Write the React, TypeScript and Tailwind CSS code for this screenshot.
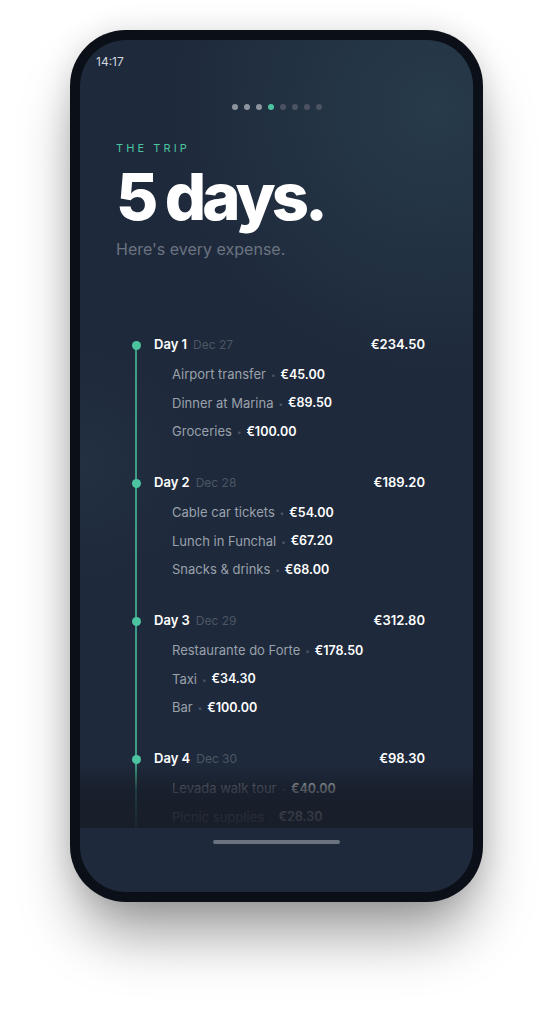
import React from "react";

const days = [
  {
    label: "Day 1",
    date: "Dec 27",
    total: "€234.50",
    items: [
      { name: "Airport transfer", amount: "€45.00" },
      { name: "Dinner at Marina", amount: "€89.50" },
      { name: "Groceries", amount: "€100.00" },
    ],
  },
  {
    label: "Day 2",
    date: "Dec 28",
    total: "€189.20",
    items: [
      { name: "Cable car tickets", amount: "€54.00" },
      { name: "Lunch in Funchal", amount: "€67.20" },
      { name: "Snacks & drinks", amount: "€68.00" },
    ],
  },
  {
    label: "Day 3",
    date: "Dec 29",
    total: "€312.80",
    items: [
      { name: "Restaurante do Forte", amount: "€178.50" },
      { name: "Taxi", amount: "€34.30" },
      { name: "Bar", amount: "€100.00" },
    ],
  },
  {
    label: "Day 4",
    date: "Dec 30",
    total: "€98.30",
    items: [
      { name: "Levada walk tour", amount: "€40.00" },
      { name: "Picnic supplies", amount: "€28.30" },
    ],
  },
];

const Dots = () => (
  <div className="flex justify-center gap-[6px] mt-[34px]">
    {[0, 1, 2, 3, 4, 5, 6, 7].map((i) => (
      <div
        key={i}
        className={`w-[6px] h-[6px] rounded-full ${
          i === 3 ? "bg-[#4cc4a0]" : i < 3 ? "bg-[#8d949e]" : "bg-[#4b5361]"
        }`}
      />
    ))}
  </div>
);

export default function App() {
  return (
    <div
      className="min-h-screen w-full bg-white flex justify-center pt-[30px]"
      style={{ fontFamily: "Inter, 'Noto Sans', sans-serif" }}
    >
      <div className="w-[413px] h-[872px] rounded-[56px] bg-[#0b0f17] p-[10px] shadow-[0_40px_60px_-10px_rgba(0,0,0,0.4),0_0_30px_rgba(0,0,0,0.12)]">
        <div className="relative w-[393px] h-[852px] rounded-[46px] bg-[#1e293b] overflow-hidden flex flex-col">
          {/* glows */}
          <div className="absolute inset-0 bg-[radial-gradient(circle_at_90%_8%,rgba(60,100,110,0.3),transparent_32%)]" />
          <div className="absolute inset-0 bg-[radial-gradient(circle_at_0%_50%,rgba(60,90,100,0.14),transparent_22%)]" />

          <div className="relative h-[788px] overflow-hidden">
            <div className="pt-[14px] pl-[16px] text-[12px] leading-[16px] text-[#d1d5db]">
              14:17
            </div>
            <Dots />

            <div className="px-[36px]">
              <div className="mt-[31px] text-[11px] leading-[14px] tracking-[0.28em] text-[#4cc4a0]">
                THE TRIP
              </div>
              <h1 className="mt-[9px] text-[65px] leading-[66px] font-extrabold tracking-[-0.06em] text-white">
                5 days.
              </h1>
              <p className="mt-[9px] text-[16px] leading-[20px] text-[#6b7380]">
                Here's every expense.
              </p>
            </div>

            <div className="relative mt-[76px] pl-[74px] pr-[48px]">
              <div className="absolute left-[55px] top-[10px] bottom-[-200px] w-[2px] bg-[#3f9c86]" />
              {days.map((d) => (
                <div key={d.label} className="relative mb-[26.75px]">
                  <div className="absolute left-[-22.5px] top-[5.5px] w-[9px] h-[9px] rounded-full bg-[#4cc4a0]" />
                  <div className="flex items-center justify-between h-[20px]">
                    <div className="flex items-baseline gap-[6px]">
                      <span className="text-[13px] font-semibold text-white">{d.label}</span>
                      <span className="text-[12px] text-[#4d5664]">{d.date}</span>
                    </div>
                    <span className="text-[13px] font-semibold text-white">{d.total}</span>
                  </div>
                  <div className="mt-[5.75px] pl-[18px]">
                    {d.items.map((it) => (
                      <div key={it.name} className="h-[28.5px] flex items-center gap-[5px]">
                        <span className="text-[13px] text-[#9aa1ab]">{it.name}</span>
                        <span className="text-[8px] text-[#4d5664]">•</span>
                        <span className="text-[12.5px] font-semibold text-white">{it.amount}</span>
                      </div>
                    ))}
                  </div>
                </div>
              ))}
            </div>

            <div className="absolute left-0 right-0 bottom-0 h-[64px] bg-[linear-gradient(to_bottom,rgba(23,29,40,0)_0%,rgba(23,29,40,0.75)_40%,rgba(23,29,40,0.93)_100%)]" />
          </div>

          <div className="relative mt-[12px] mx-auto w-[127px] h-[4px] rounded-full bg-[#6b7280]" />
        </div>
      </div>
    </div>
  );
}
